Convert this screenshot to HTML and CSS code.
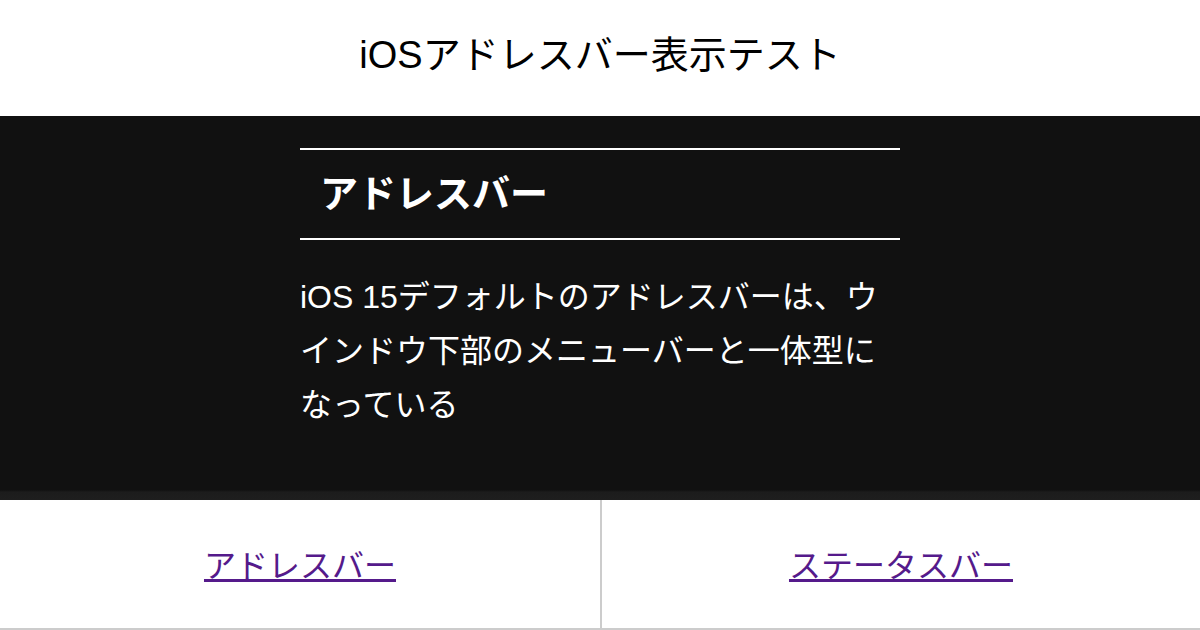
FILE: index.html
```html
<!DOCTYPE html>
<html lang="ja">
<head>
<meta charset="utf-8">
<title>iOSアドレスバー表示テスト</title>
<link rel="stylesheet" href="styles.css">
</head>
<body>
<header class="site-header">
  <h1 class="site-title">iOSアドレスバー表示テスト</h1>
</header>
<main class="stage">
  <section class="content">
    <h2 class="section-title">アドレスバー</h2>
    <p class="section-text">iOS 15デフォルトのアドレスバーは、ウインドウ下部のメニューバーと一体型になっている</p>
  </section>
</main>
<nav class="tabs">
  <div class="tab"><a class="tab-link" href="#address">アドレスバー</a></div>
  <div class="tab tab-right"><a class="tab-link" href="#status">ステータスバー</a></div>
</nav>
</body>
</html>
```

FILE: styles.css
```css
html, body {
  margin: 0;
  padding: 0;
}
body {
  width: 1200px;
  height: 630px;
  overflow: hidden;
  background: #fff;
  color: #000;
  font-family: "Liberation Sans", "Noto Sans CJK JP", sans-serif;
}
.site-header {
  height: 116px;
  display: flex;
  align-items: center;
  justify-content: center;
}
.site-title {
  margin: 0;
  font-size: 38px;
  font-weight: normal;
  line-height: 1;
  padding-bottom: 6px;
}
.stage {
  height: 384px;
  box-sizing: border-box;
  background: linear-gradient(to bottom, #111 0, #111 374px, #1c1c1c 376px, #1e1e1e 384px);
  color: #fff;
  padding-top: 32px;
}
.content {
  width: 600px;
  margin: 0 auto;
}
.section-title {
  margin: 0;
  border-top: 2px solid #fff;
  border-bottom: 2px solid #fff;
  padding-left: 20px;
  font-size: 38px;
  font-weight: bold;
  line-height: 88px;
}
.section-text {
  margin: 30px 0 0;
  font-size: 32px;
  line-height: 54px;
}
.tabs {
  display: grid;
  grid-template-columns: 600px 1fr;
  height: 130px;
  box-sizing: border-box;
  border-bottom: 2px solid #ccc;
}
.tab {
  display: flex;
  align-items: center;
  justify-content: center;
  padding-bottom: 3px;
}
.tab-right {
  border-left: 2px solid #ccc;
}
.tab-link {
  color: #551a8b;
  font-size: 32px;
  text-decoration: underline;
}
```
